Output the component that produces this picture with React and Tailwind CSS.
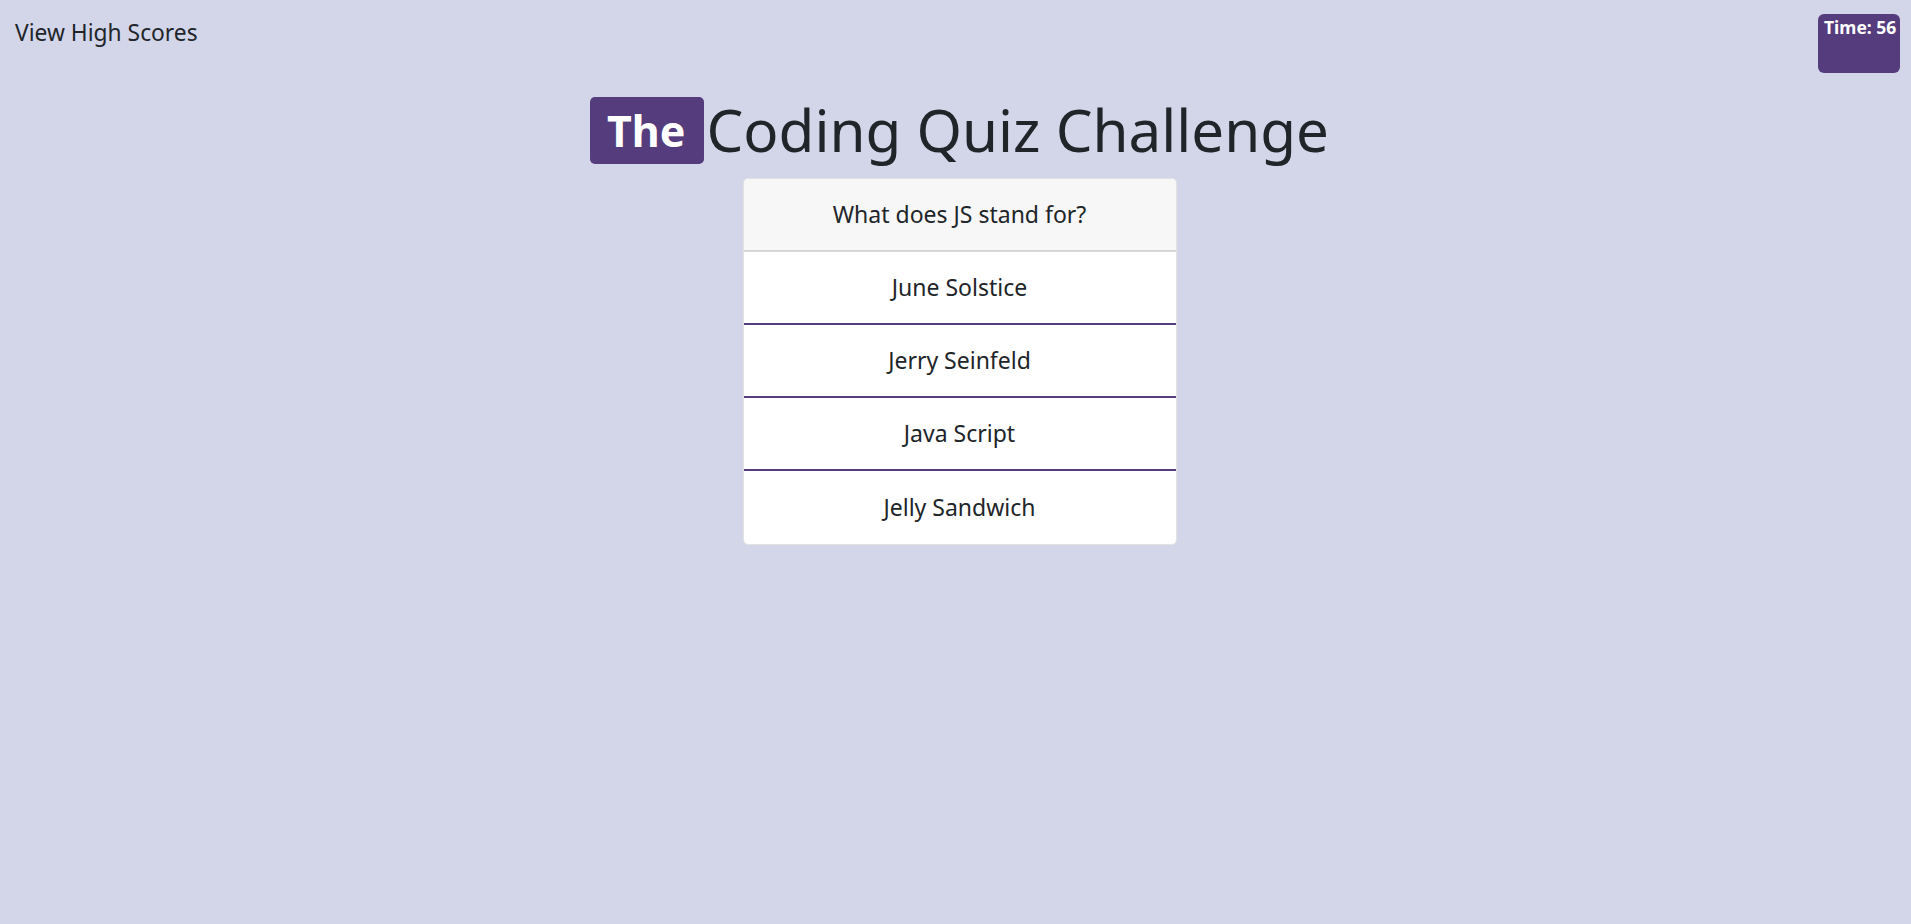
const answers = ["June Solstice", "Jerry Seinfeld", "Java Script", "Jelly Sandwich"];

const App = () => {
  return (
    <div className="min-h-screen bg-[#d3d6e9] text-[#212529] font-['Noto_Sans',sans-serif]">
      <header className="flex justify-between items-start pl-[15px] pr-[11px] pt-[14px]">
        <a href="#" className="mt-[3px] text-[22.8px] leading-[32px] text-[#212529]">
          View High Scores
        </a>
        <div className="w-[82px] h-[59px] rounded-md bg-[#553c7c] text-white text-[17.5px] font-bold leading-5 pl-[6px] pt-[3px] whitespace-nowrap">
          Time: 56
        </div>
      </header>

      <main className="flex flex-col items-center pl-2 mt-[24px]">
        <h1 className="flex items-center text-[58.3px] leading-none whitespace-nowrap">
          <span className="h-[67px] flex items-center rounded-[5px] bg-[#553c7c] text-white font-bold text-[43px] pl-[17px] pr-[19px] mr-[2px]">
            The
          </span>
          <span>Coding Quiz Challenge</span>
        </h1>

        <div className="mt-[14px] w-[434px] rounded-[5px] border border-[#e2e2e2] bg-white overflow-hidden">
          <div className="h-[73px] flex items-center justify-center bg-[#f7f7f7] border-b-2 border-[#d6d6d6] text-[23px]">
            What does JS stand for?
          </div>
          {answers.map((a, i) => (
            <div
              key={a}
              className={`h-[73px] flex items-center justify-center text-[23px] ${
                i < answers.length - 1 ? "border-b-2 border-[#553c7c]" : ""
              }`}
            >
              {a}
            </div>
          ))}
        </div>
      </main>
    </div>
  );
};

export default App;
